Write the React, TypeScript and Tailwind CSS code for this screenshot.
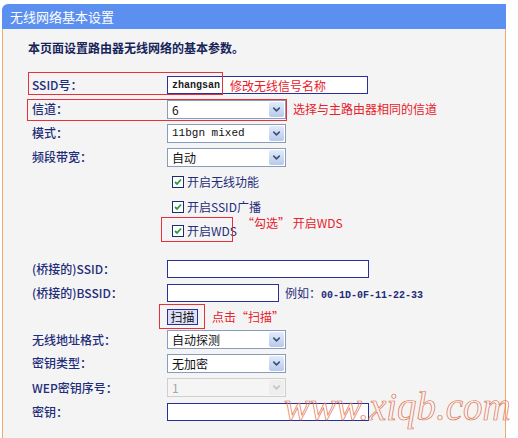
import { ChevronDown } from "lucide-react";

const cjk = "font-['Noto_Sans_CJK_SC','Noto_Sans',sans-serif]";

function Select({ value, mono, disabled }: { value: string; mono?: boolean; disabled?: boolean }) {
  return (
    <div
      className={`flex h-[19px] w-[119px] border p-px ${
        disabled ? "border-[#cfcfcf] bg-[#f5f5f5] text-[#a8a8a8]" : "border-[#8a9cbc] bg-white text-[#111]"
      }`}
    >
      <span
        className={`flex-1 pl-[3px] leading-[15px] ${
          mono ? "font-['Liberation_Mono',monospace] text-[11px]" : "text-[12px]"
        }`}
      >
        {value}
      </span>
      <span
        className={`flex w-[15px] items-center justify-center rounded-[2px] ${
          disabled ? "bg-[#eeeeee]" : "bg-linear-to-b from-[#e2ebfa] to-[#b7c9ea]"
        }`}
      >
        <ChevronDown size={11} strokeWidth={3.5} className={disabled ? "text-[#c4c4c4]" : "text-[#3c527a]"} />
      </span>
    </div>
  );
}

function TextInput({ width, value }: { width: string; value?: string }) {
  return (
    <div className={`flex h-[18px] items-center border border-[#2a2f9a] bg-white pl-[4px] ${width}`}>
      {value && <span className="font-['Liberation_Mono',monospace] text-[10px] font-bold text-[#1a1a1a]">{value}</span>}
    </div>
  );
}

function Check({ label }: { label: string }) {
  return (
    <div className="flex items-center gap-[3px] pl-[5px]">
      <span className="flex h-[12px] w-[12px] items-center justify-center border border-[#1c2c6c] bg-white">
        <svg width="8" height="8" viewBox="0 0 8 8">
          <path d="M1 4 L3 6 L7 1.5" fill="none" stroke="#21a03a" strokeWidth="1.8" />
        </svg>
      </span>
      <span className="text-[12px] text-[#1f2d7a]">{label}</span>
    </div>
  );
}

function Row({ label, h, children }: { label?: string; h: string; children: React.ReactNode }) {
  return (
    <div className={`relative grid grid-cols-[139px_1fr] items-center ${h}`}>
      <span className="pl-[4px] text-[12px] font-medium text-[#1f2d7a]">{label}</span>
      <div className="relative flex items-center">{children}</div>
    </div>
  );
}

export default function App() {
  return (
    <div className={`relative h-[438px] w-[518px] overflow-hidden bg-white ${cjk}`}>
      <div className="ml-[2px] mt-[4px] w-[504px]">
        <div className="h-[25px] rounded-tl-[6px] bg-[#5b8ff0] pl-[8px] text-[13px] leading-[25px] text-white">
          无线网络基本设置
        </div>
        <div className="h-[409px] border-x border-[#f2a868] bg-[#f4f4f4] pl-[25px]">
          <p className="pt-[11px] text-[12px] font-bold leading-[16px] text-[#16245a]">
            本页面设置路由器无线网络的基本参数。
          </p>

          <div className="mt-[17px] w-[470px]">
            <Row label="SSID号：" h="h-6">
              <TextInput width="w-[201px]" value="zhangsan" />
              <span className="absolute left-[63px] top-[1px] text-[12px] text-[#e8202a]">修改无线信号名称</span>
            </Row>
            <div className="pointer-events-none absolute left-[28px] top-[72px] h-[23px] w-[195px] border border-[#e8303a]" />

            <Row label="信道：" h="h-6">
              <Select value="6" />
              <span className="ml-[7px] text-[12px] text-[#e8202a]">选择与主路由器相同的信道</span>
            </Row>
            <div className="pointer-events-none absolute left-[27px] top-[99px] h-[22px] w-[260px] border border-[#e8303a]" />

            <Row label="模式：" h="h-6">
              <Select value="11bgn mixed" mono />
            </Row>
            <Row label="频段带宽：" h="h-6">
              <Select value="自动" />
            </Row>

            <Row h="h-[25px]">
              <Check label="开启无线功能" />
            </Row>
            <Row h="h-[25px]">
              <Check label="开启SSID广播" />
            </Row>
            <Row h="h-6">
              <Check label="开启WDS" />
              <span className="absolute left-[75px] top-[-8px] text-[12px] text-[#e8202a]">“勾选” 开启WDS</span>
            </Row>
            <div className="pointer-events-none absolute left-[161px] top-[217px] h-[25px] w-[72px] border border-[#e8303a]" />

            <div className="mt-[14px]">
              <Row label="(桥接的)SSID：" h="h-6">
                <TextInput width="w-[202px]" />
              </Row>
              <Row label="(桥接的)BSSID：" h="h-6">
                <TextInput width="w-[112px]" />
                <span className="ml-[6px] text-[12px] text-[#1f2d7a]">
                  例如：<span className="font-['Liberation_Mono',monospace] text-[10px] font-bold">00-1D-0F-11-22-33</span>
                </span>
              </Row>
              <Row h="h-[23px]">
                <button className="h-[16px] w-[31px] border border-[#2a2f9a] bg-[#dde0f6] text-[12px] leading-[14px] text-[#111]">
                  扫描
                </button>
                <span className="ml-[14px] text-[12px] text-[#e8202a]">点击“扫描”</span>
              </Row>
              <Row label="无线地址格式：" h="h-[23px]">
                <Select value="自动探测" />
              </Row>
              <Row label="密钥类型：" h="h-6">
                <Select value="无加密" />
              </Row>
              <Row label="WEP密钥序号：" h="h-[25px]">
                <Select value="1" disabled />
              </Row>
              <Row label="密钥：" h="h-6">
                <TextInput width="w-[202px]" />
              </Row>
            </div>
            <div className="pointer-events-none absolute left-[159px] top-[304px] h-[25px] w-[46px] border border-[#e8303a]" />
          </div>
        </div>
      </div>

      <div className="pointer-events-none absolute left-[284px] top-[378px] font-['Liberation_Serif',serif] text-[39px] italic text-transparent [-webkit-text-stroke:0.7px_#e2704c]">
        www.xiqb.com
      </div>
    </div>
  );
}
